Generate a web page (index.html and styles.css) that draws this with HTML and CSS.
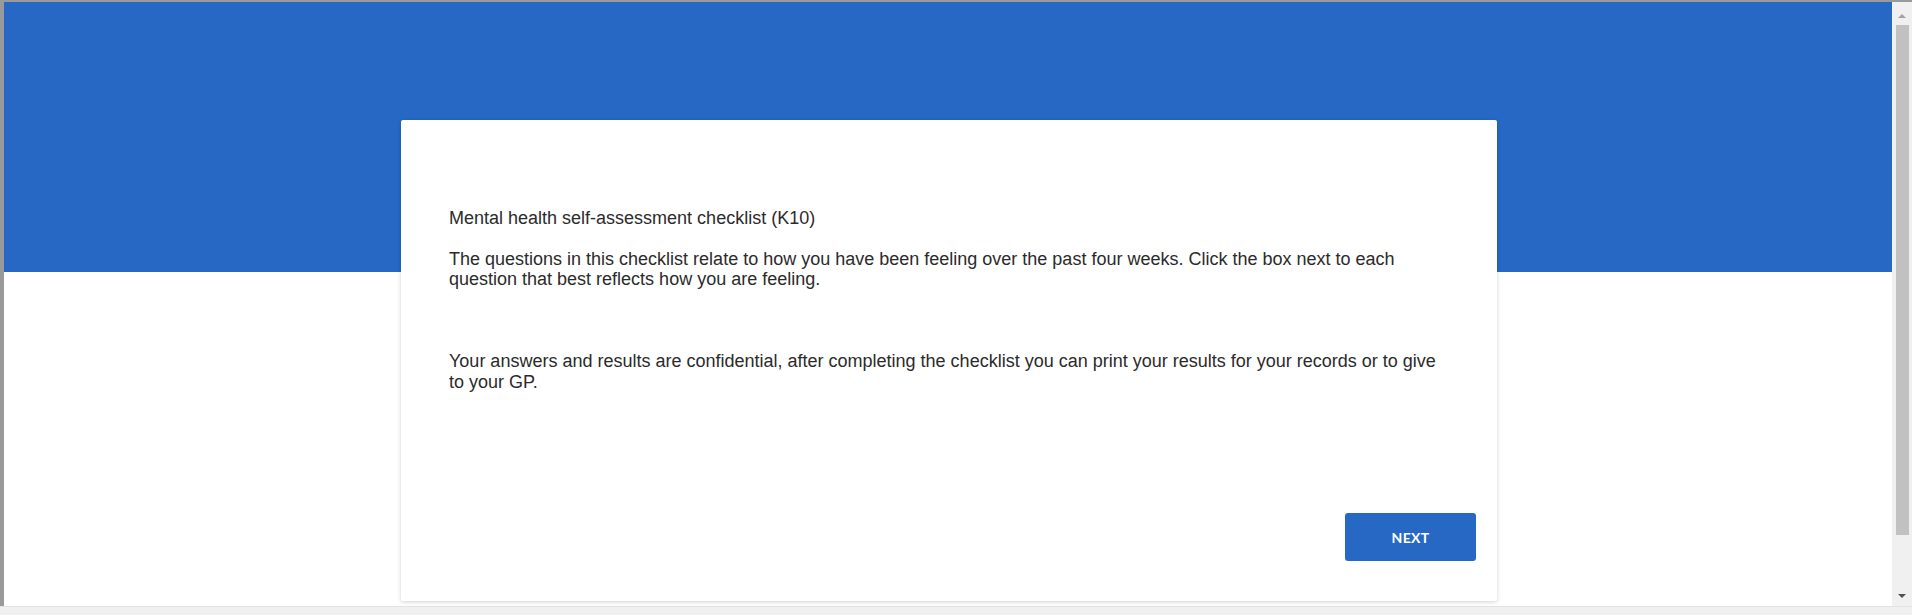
FILE: index.html
```html
<!DOCTYPE html>
<html lang="en">
<head>
<meta charset="utf-8">
<title>K10 checklist</title>
<link rel="stylesheet" href="styles.css">
</head>
<body>
<div class="window">
  <div class="viewport">
    <div class="page">
      <div class="hero"></div>
      <div class="card">
        <div class="card-body">
          <p class="title">Mental health self-assessment checklist (K10)</p>
          <p>The questions in this checklist relate to how you have been feeling over the past four weeks. Click the box next to each question that best reflects how you are feeling.</p>
          <p class="spacer">&nbsp;</p>
          <p>Your answers and results are confidential, after completing the checklist you can print your results for your records or to give to your GP.</p>
        </div>
        <div class="card-footer">
          <button class="btn-next" type="button">NEXT</button>
        </div>
      </div>
    </div>
    <div class="scrollbar">
      <div class="arrow arrow-up"></div>
      <div class="thumb"></div>
      <div class="arrow arrow-down"></div>
    </div>
  </div>
  <div class="bottom-strip"></div>
</div>
</body>
</html>
```

FILE: styles.css
```css
html, body {
  margin: 0;
  padding: 0;
  background: #ffffff;
  overflow: hidden;
}

.window {
  width: 1912px;
  height: 615px;
  display: flex;
  flex-direction: column;
  border-top: 2px solid #9a9a9a;
  box-sizing: border-box;
}

.viewport {
  flex: 1;
  display: flex;
  min-height: 0;
  border-left: 4px solid #9a9a9a;
}

.page {
  flex: 1;
  position: relative;
  overflow: hidden;
  background: #ffffff;
}

.hero {
  height: 270px;
  background: #2668c4;
}

.card {
  position: absolute;
  left: 397px;
  top: 118px;
  width: 1096px;
  height: 481px;
  background: #ffffff;
  border-radius: 2px;
  box-shadow: 0 1px 4px rgba(0, 0, 0, 0.18);
  display: flex;
  flex-direction: column;
  box-sizing: border-box;
}

.card-body {
  padding: 88px 48px 0 48px;
  font-family: "Liberation Sans", Arial, sans-serif;
  font-size: 18px;
  line-height: 20.7px;
  color: #2b2b2b;
}

.card-body p {
  margin: 0 0 20px 0;
}

.card-footer {
  margin-top: auto;
  display: flex;
  justify-content: flex-end;
  padding: 0 21px 40px 0;
}

.btn-next {
  width: 131px;
  height: 48px;
  border: none;
  border-radius: 3px;
  background: #2668c4;
  color: #ffffff;
  font-family: Lato, "Liberation Sans", sans-serif;
  font-weight: 700;
  font-size: 14px;
  letter-spacing: 0.3px;
  cursor: pointer;
}

.scrollbar {
  width: 20px;
  background: #f0f0f0;
  display: flex;
  flex-direction: column;
  align-items: center;
}

.arrow {
  width: 0;
  height: 0;
  border-left: 4px solid transparent;
  border-right: 4px solid transparent;
}

.arrow-up {
  margin-top: 12px;
  border-bottom: 4px solid #a3a3a3;
}

.arrow-down {
  margin-top: auto;
  margin-bottom: 8px;
  border-top: 4px solid #505050;
}

.thumb {
  margin-top: 7px;
  width: 13px;
  height: 510px;
  background: #c1c1c1;
}

.bottom-strip {
  height: 8px;
  background: #f0f0f0;
  border-top: 1px solid #e2e2e2;
}
```
